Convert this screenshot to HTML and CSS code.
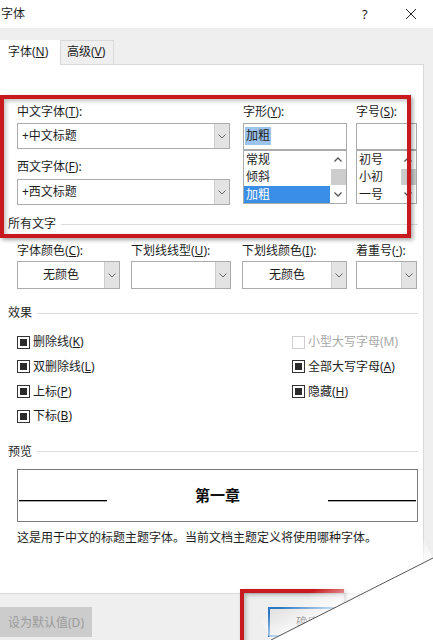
FILE: index.html
```html
<!DOCTYPE html>
<html lang="zh-CN">
  <head>
    <meta charset="UTF-8" />
    <title>字体</title>
    <link rel="stylesheet" href="styles.css">
  </head>
  <body>
    <div class="titlebar">
      <span class="title">字体</span>
      <span class="help">?</span>
      <svg class="close" width="12" height="12" viewBox="0 0 12 12">
        <path d="M1 1 L11 11 M11 1 L1 11" stroke="#222" stroke-width="1" fill="none" />
      </svg>
    </div>

    <div class="tabs">
      <div class="tab tab-active">字体(<u>N</u>)</div>
      <div class="tab tab-other">高级(<u>V</u>)</div>
    </div>

    <div class="panel">
      <!-- font name / style / size -->
      <div class="font-row">
        <div class="col-name">
          <span class="field-label">中文字体(<u>T</u>):</span>
          <div class="combo">
            <span class="value">+中文标题</span>
            <span class="arrow"><svg width="8" height="5" viewBox="0 0 8 5"><polyline points="0.5,0.5 4,4 7.5,0.5" fill="none" stroke="#666" /></svg></span>
          </div>
          <span class="field-label label-2">西文字体(<u>F</u>):</span>
          <div class="combo combo-2">
            <span class="value">+西文标题</span>
            <span class="arrow"><svg width="8" height="5" viewBox="0 0 8 5"><polyline points="0.5,0.5 4,4 7.5,0.5" fill="none" stroke="#666" /></svg></span>
          </div>
        </div>

        <div class="col-style">
          <span class="field-label">字形(<u>Y</u>):</span>
          <div class="textbox"><span class="sel">加粗</span></div>
          <div class="listbox">
            <ul>
              <li>常规</li>
              <li>倾斜</li>
              <li class="selected">加粗</li>
            </ul>
            <div class="scrollbar">
              <span class="sb-btn"><svg width="8" height="5" viewBox="0 0 8 5"><polyline points="0.5,4.5 4,1 7.5,4.5" fill="none" stroke="#555" stroke-width="1.3" /></svg></span>
              <span class="sb-track"><span class="thumb"></span></span>
              <span class="sb-btn"><svg width="8" height="5" viewBox="0 0 8 5"><polyline points="0.5,0.5 4,4 7.5,0.5" fill="none" stroke="#555" stroke-width="1.3" /></svg></span>
            </div>
          </div>
        </div>

        <div class="col-size">
          <span class="field-label">字号(<u>S</u>):</span>
          <div class="textbox"></div>
          <div class="listbox">
            <ul>
              <li>初号</li>
              <li>小初</li>
              <li>一号</li>
            </ul>
            <div class="scrollbar">
              <span class="sb-btn"><svg width="8" height="5" viewBox="0 0 8 5"><polyline points="0.5,4.5 4,1 7.5,4.5" fill="none" stroke="#555" stroke-width="1.3" /></svg></span>
              <span class="sb-track"><span class="thumb"></span></span>
              <span class="sb-btn"><svg width="8" height="5" viewBox="0 0 8 5"><polyline points="0.5,0.5 4,4 7.5,0.5" fill="none" stroke="#555" stroke-width="1.3" /></svg></span>
            </div>
          </div>
        </div>
      </div>

      <div class="group-title">所有文字</div>

      <div class="attr-row">
        <div class="attr attr-1">
          <span class="field-label">字体颜色(<u>C</u>):</span>
          <div class="combo combo-tall">
            <span class="value centered">无颜色</span>
            <span class="arrow"><svg width="8" height="5" viewBox="0 0 8 5"><polyline points="0.5,0.5 4,4 7.5,0.5" fill="none" stroke="#666" /></svg></span>
          </div>
        </div>
        <div class="attr attr-2">
          <span class="field-label">下划线线型(<u>U</u>):</span>
          <div class="combo combo-tall">
            <span class="value"></span>
            <span class="arrow"><svg width="8" height="5" viewBox="0 0 8 5"><polyline points="0.5,0.5 4,4 7.5,0.5" fill="none" stroke="#666" /></svg></span>
          </div>
        </div>
        <div class="attr attr-3">
          <span class="field-label">下划线颜色(<u>I</u>):</span>
          <div class="combo combo-tall">
            <span class="value centered">无颜色</span>
            <span class="arrow"><svg width="8" height="5" viewBox="0 0 8 5"><polyline points="0.5,0.5 4,4 7.5,0.5" fill="none" stroke="#666" /></svg></span>
          </div>
        </div>
        <div class="attr attr-4">
          <span class="field-label">着重号(<u>·</u>):</span>
          <div class="combo combo-tall">
            <span class="value"></span>
            <span class="arrow"><svg width="8" height="5" viewBox="0 0 8 5"><polyline points="0.5,0.5 4,4 7.5,0.5" fill="none" stroke="#666" /></svg></span>
          </div>
        </div>
      </div>

      <div class="group-title title-effects">效果</div>

      <div class="effects">
        <div class="check"><span class="box"></span><span>删除线(<u>K</u>)</span></div>
        <div class="check disabled"><span class="box"></span><span>小型大写字母(M)</span></div>
        <div class="check"><span class="box"></span><span>双删除线(<u>L</u>)</span></div>
        <div class="check"><span class="box"></span><span>全部大写字母(<u>A</u>)</span></div>
        <div class="check"><span class="box"></span><span>上标(<u>P</u>)</span></div>
        <div class="check"><span class="box"></span><span>隐藏(<u>H</u>)</span></div>
        <div class="check"><span class="box"></span><span>下标(<u>B</u>)</span></div>
      </div>

      <div class="group-title title-preview">预览</div>

      <div class="preview">
        <span class="rule rule-left"></span>
        <span class="sample">第一章</span>
        <span class="rule rule-right"></span>
      </div>

      <p class="desc">这是用于中文的标题主题字体。当前文档主题定义将使用哪种字体。</p>
    </div>

    <div class="footer">
      <button class="btn btn-default">设为默认值(D)</button>
      <button class="btn btn-ok">确定</button>
    </div>

    <!-- red annotation frames -->
    <div class="mark mark-top"></div>
    <div class="mark mark-bottom"></div>

    <!-- page curl at the bottom right -->
    <svg class="curl" width="433" height="640" viewBox="0 0 433 640">
      <defs>
        <linearGradient id="glow" gradientUnits="userSpaceOnUse" x1="352.5" y1="598" x2="341" y2="576">
          <stop offset="0" stop-color="#fff" stop-opacity="0.75" />
          <stop offset="1" stop-color="#fff" stop-opacity="0" />
        </linearGradient>
      </defs>
      <polygon points="433,558 271,640 259,617 421,535" fill="url(#glow)" />
      <polygon points="433,558 433,640 271,640" fill="#fff" />
      <line x1="433" y1="558" x2="271" y2="640" stroke="#555" stroke-width="1" />
    </svg>
  </body>
</html>
```

FILE: styles.css
```css
/* Basic Reset */
* {
  margin: 0;
  padding: 0;
  box-sizing: border-box;
}

body {
  position: relative;
  width: 433px;
  height: 640px;
  overflow: hidden;
  background: #efefef;
  font-family: "Noto Sans", "Noto Sans CJK SC", sans-serif;
  font-size: 12px;
  line-height: 16px;
  color: #1e1e1e;
}

u {
  text-decoration: underline;
  text-underline-offset: 1px;
}

/* Title bar */
.titlebar {
  height: 28px;
  background: #fff;
  display: flex;
  align-items: center;
}

.title {
  flex: 1;
  margin-left: 1px;
}

.help {
  width: 7px;
  margin-right: 36px;
  font-size: 13px;
}

.close {
  margin-right: 16px;
}

/* Tabs */
.tabs {
  display: flex;
  height: 24px;
  margin-top: 12px;
}

.tab {
  height: 24px;
  padding-top: 4px;
  white-space: nowrap;
}

.tab-active {
  position: relative;
  width: 60px;
  height: 25px;
  padding-left: 8px;
  background: #fff;
}

.tab-other {
  width: 54px;
  padding-left: 6px;
  padding-top: 3px;
  border: 1px solid #d9d9d9;
  border-bottom: none;
}

/* Tab panel */
.panel {
  width: 424px;
  height: 530px;
  padding-top: 39px;
  background: #fff;
  border-top: 1px solid #d9d9d9;
  border-right: 1px solid #d9d9d9;
  border-bottom: 1px solid #d9d9d9;
}

.field-label {
  display: block;
  height: 16px;
  white-space: nowrap;
}

.font-row {
  display: flex;
  align-items: flex-start;
}

.col-name {
  width: 213px;
  margin-left: 17px;
}

.col-style {
  width: 104px;
  margin-left: 13px;
}

.col-size {
  width: 61px;
  margin-left: 9px;
}

.combo {
  display: flex;
  height: 26px;
  margin-top: 3px;
  border: 1px solid #ababab;
  background: #fff;
}

.combo .value {
  flex: 1;
  padding-left: 4px;
  line-height: 24px;
  white-space: nowrap;
}

.combo .value.centered {
  padding-left: 0;
  text-align: center;
}

.combo .arrow {
  width: 15px;
  display: flex;
  align-items: center;
  justify-content: center;
  background: #e3e3e3;
  border-left: 1px solid #cdcdcd;
}

.label-2 {
  margin-top: 10px;
}

.combo-2 {
  margin-top: 4px;
}

.combo-tall {
  height: 28px;
  margin-top: 2px;
}

.combo-tall .value {
  line-height: 26px;
}

.textbox {
  height: 27px;
  margin-top: 3px;
  padding: 3px 0 0 1px;
  border: 1px solid #ababab;
}

.textbox .sel {
  display: inline-block;
  padding: 0 1px;
  line-height: 18px;
  background: #9cc3ec;
}

.listbox {
  display: flex;
  height: 54px;
  border: 1px solid #ababab;
}

.listbox ul {
  flex: 1;
  list-style: none;
}

.listbox li {
  height: 17.33px;
  line-height: 17px;
  padding-left: 2px;
}

.listbox li.selected {
  background: #3b8ee5;
  color: #fff;
}

.scrollbar {
  width: 16px;
  display: flex;
  flex-direction: column;
}

.sb-btn {
  height: 17px;
  display: flex;
  align-items: center;
  justify-content: center;
}

.sb-track {
  flex: 1;
  padding: 1px 0 1px 1px;
}

.thumb {
  display: block;
  height: 100%;
  background: #cdcdcd;
}

/* Group headings with rule */
.group-title {
  display: flex;
  align-items: center;
  height: 16px;
  margin: 11px 5px 0 8px;
}

.group-title::after {
  content: "";
  flex: 1;
  height: 1px;
  margin-left: 5px;
  background: #dcdcdc;
}

.title-effects {
  margin-top: 16px;
}

.title-preview {
  margin-top: 15px;
}

/* Colour / underline row */
.attr-row {
  display: flex;
  margin-top: 11px;
}

.attr-1 {
  width: 103px;
  margin-left: 17px;
}

.attr-2 {
  width: 100px;
  margin-left: 11px;
}

.attr-3 {
  width: 105px;
  margin-left: 11px;
}

.attr-4 {
  width: 61px;
  margin-left: 9px;
}

/* Effects checkboxes */
.effects {
  display: grid;
  grid-template-columns: 275px auto;
  grid-auto-rows: 24.67px;
  align-items: center;
  margin: 9px 0 0 17px;
}

.check {
  display: flex;
  align-items: center;
  gap: 3px;
  white-space: nowrap;
}

.box {
  width: 13px;
  height: 13px;
  display: flex;
  align-items: center;
  justify-content: center;
  border: 1px solid #333;
}

.box::after {
  content: "";
  width: 7px;
  height: 7px;
  background: #2b2b2b;
}

.check.disabled {
  color: #a8a8a8;
}

.check.disabled .box {
  border-color: #cfcfcf;
}

.check.disabled .box::after {
  display: none;
}

/* Preview */
.preview {
  display: flex;
  align-items: center;
  width: 401px;
  height: 53px;
  margin: 9px 0 0 17px;
  border: 1px solid #7a7a7a;
}

.rule {
  align-self: flex-end;
  width: 88px;
  height: 1px;
  margin-bottom: 20px;
  background: #000;
  box-shadow: 0 0.5px 0 #555;
}

.rule-left {
  margin-left: 1px;
}

.rule-right {
  margin-right: 1px;
}

.sample {
  flex: 1;
  text-align: center;
  font-size: 15px;
  font-weight: bold;
  line-height: 20px;
  color: #111;
}

.desc {
  margin: 8px 0 0 17px;
  white-space: nowrap;
}

/* Bottom buttons */
.footer {
  display: flex;
  height: 46px;
  padding-top: 13px;
}

.btn {
  height: 30px;
  font-family: inherit;
  font-size: 12px;
}

.btn-default {
  width: 92px;
  border: none;
  background: #cccccc;
  color: #9b9b9b;
}

.btn-ok {
  width: 75px;
  margin-left: 176px;
  padding-left: 26px;
  text-align: left;
  border: 2px solid #2a78c4;
  background: #e3e3e3;
  color: #222;
}

/* Red annotation frames */
.mark {
  position: absolute;
  border: 4px solid #c8191e;
  box-shadow: 2px 2px 4px rgba(0, 0, 0, 0.35), inset 2px 2px 4px rgba(0, 0, 0, 0.25);
  pointer-events: none;
}

.mark-top {
  left: 0;
  top: 95px;
  width: 411px;
  height: 143px;
}

.mark-bottom {
  left: 240px;
  top: 589px;
  width: 104px;
  height: 70px;
  border-right: none;
}

/* Page curl */
.curl {
  position: absolute;
  left: 0;
  top: 0;
  pointer-events: none;
}
```
